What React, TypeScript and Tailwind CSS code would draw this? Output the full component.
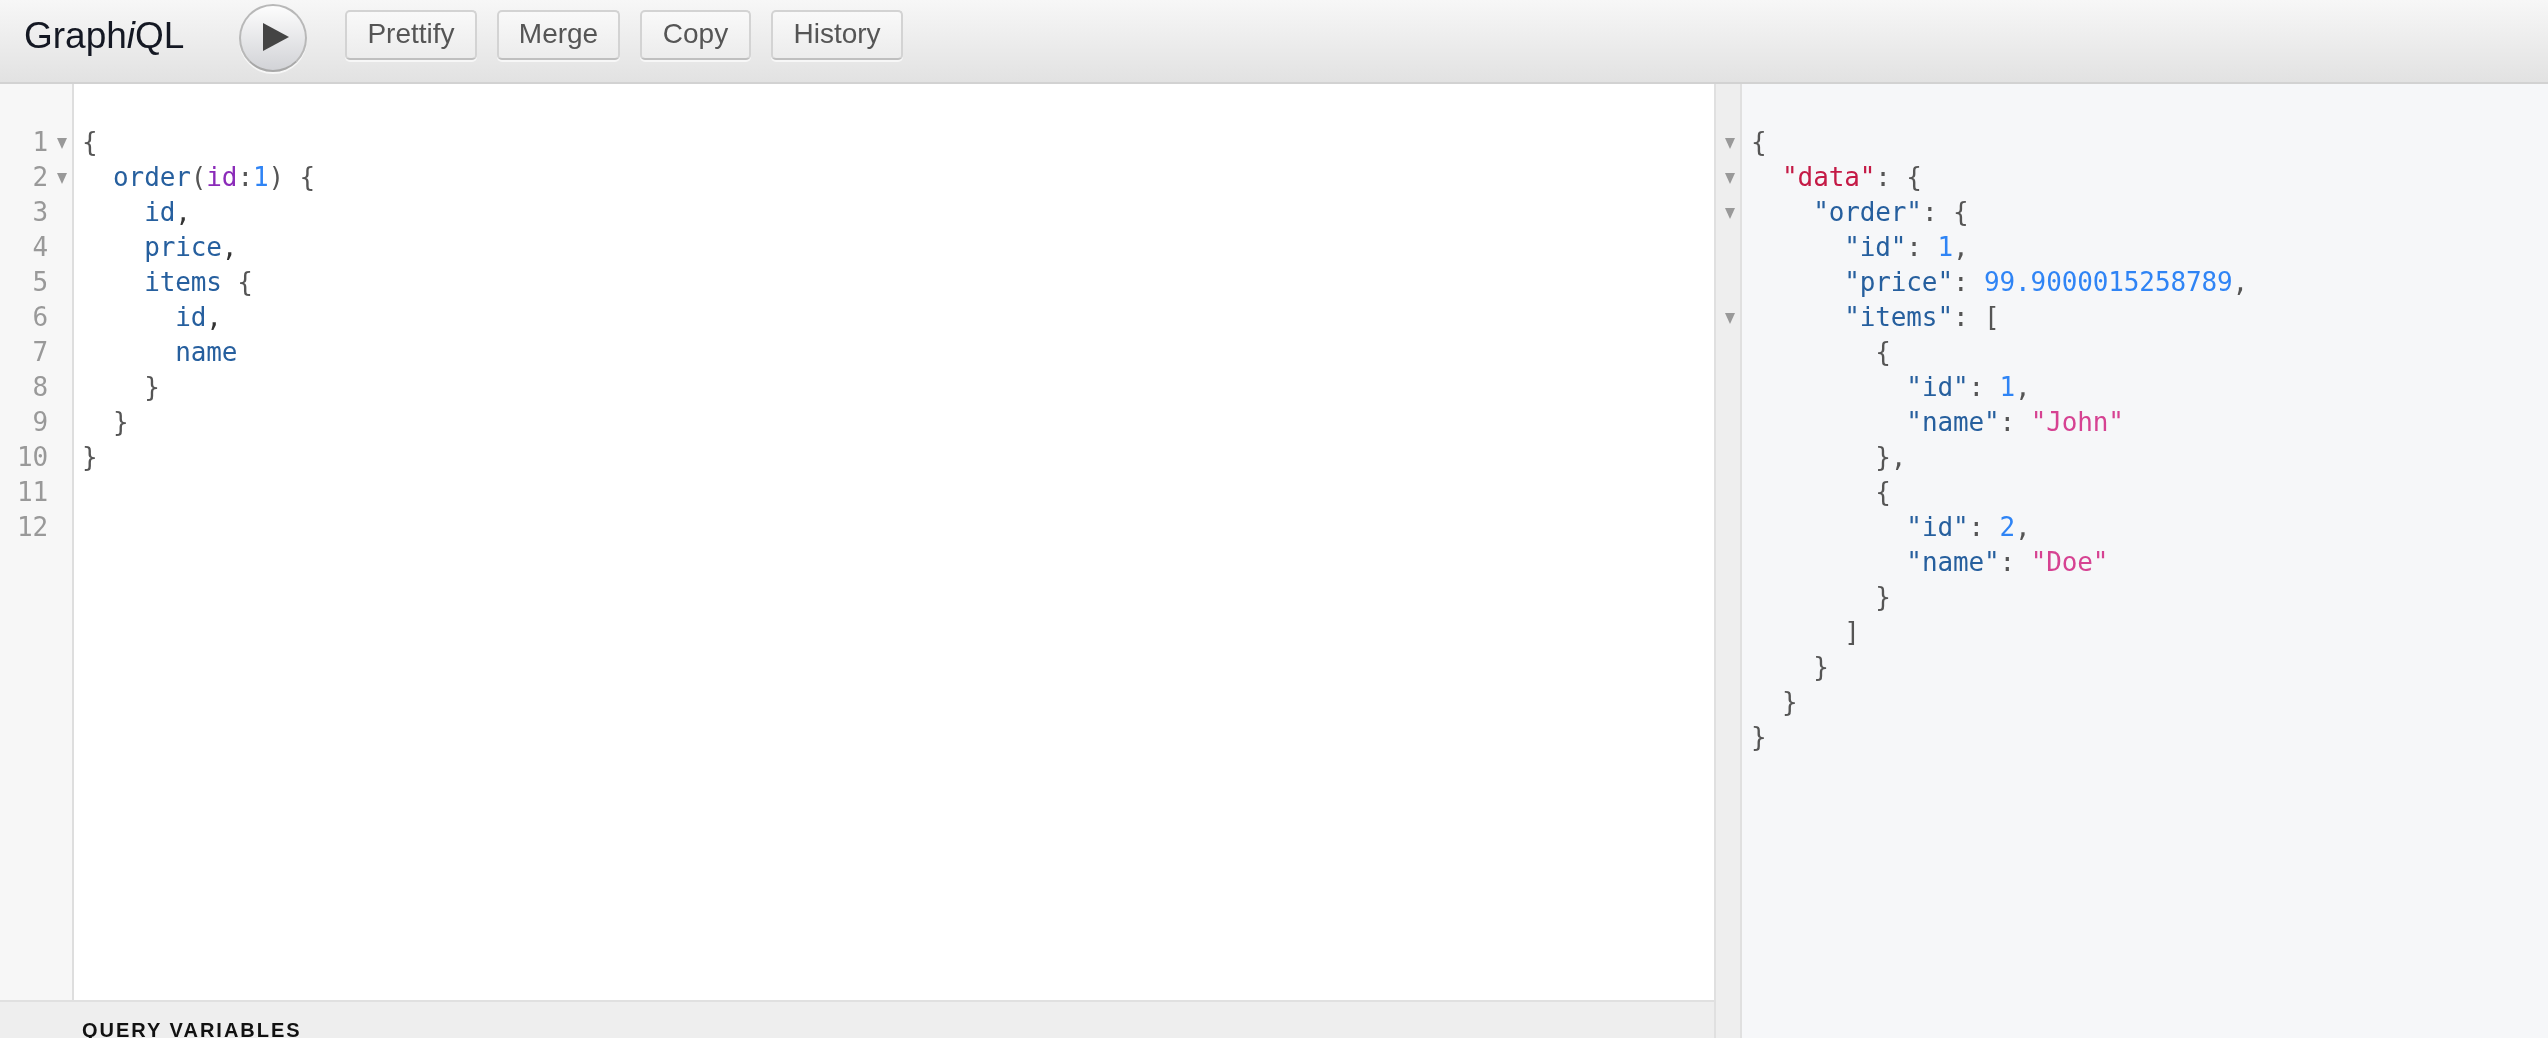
import React from 'react';

type Tok = [string, string];

const P = 'text-[#555555]';
const K = 'text-[#265f9e]';
const A = 'text-[#8b2bb9]';
const N = 'text-[#2f84f5]';
const S = 'text-[#d64292]';
const D = 'text-[#c41a46]';

const query: Tok[][] = [
  [['{', P]],
  [['  ', P], ['order', K], ['(', P], ['id', A], [':', P], ['1', N], [')', P], [' {', P]],
  [['    ', P], ['id', K], [',', 'text-[#333333]']],
  [['    ', P], ['price', K], [',', 'text-[#333333]']],
  [['    ', P], ['items', K], [' {', P]],
  [['      ', P], ['id', K], [',', 'text-[#333333]']],
  [['      ', P], ['name', K]],
  [['    }', P]],
  [['  }', P]],
  [['}', P]],
  [],
  [],
];

const result: Tok[][] = [
  [['{', P]],
  [['  ', P], ['"data"', D], [': {', P]],
  [['    ', P], ['"order"', K], [': {', P]],
  [['      ', P], ['"id"', K], [': ', P], ['1', N], [',', P]],
  [['      ', P], ['"price"', K], [': ', P], ['99.9000015258789', N], [',', P]],
  [['      ', P], ['"items"', K], [': [', P]],
  [['        {', P]],
  [['          ', P], ['"id"', K], [': ', P], ['1', N], [',', P]],
  [['          ', P], ['"name"', K], [': ', P], ['"John"', S]],
  [['        },', P]],
  [['        {', P]],
  [['          ', P], ['"id"', K], [': ', P], ['2', N], [',', P]],
  [['          ', P], ['"name"', K], [': ', P], ['"Doe"', S]],
  [['        }', P]],
  [['      ]', P]],
  [['    }', P]],
  [['  }', P]],
  [['}', P]],
];

const queryFolds = [0, 1];
const resultFolds = [0, 1, 2, 5];

function Fold() {
  return (
    <svg width="10" height="11" viewBox="0 0 10 11" className="block mt-[2px]">
      <polygon points="0,0 10,0 5,11" fill="#999999" />
    </svg>
  );
}

function Code({ lines }: { lines: Tok[][] }) {
  return (
    <div className="font-['DejaVu_Sans_Mono',monospace] text-[26px] leading-[35px] whitespace-pre tracking-[-0.12px]">
      {lines.map((line, i) => (
        <div key={i} className="h-[35px]">
          {line.map(([text, color], j) => (
            <span key={j} className={color}>{text}</span>
          ))}
        </div>
      ))}
    </div>
  );
}

function ToolbarButton({ label, width }: { label: string; width: string }) {
  return (
    <button
      className={`${width} h-[50px] rounded-[5px] border-2 border-[#d3d3d3] border-b-[#bfbfbf] bg-gradient-to-b from-[#f9f9f9] to-[#ececec] shadow-[0_2px_0_#f7f7f7] font-['Liberation_Sans',sans-serif] text-[28px] text-[#555555] flex items-center justify-center pb-[2px]`}
    >
      {label}
    </button>
  );
}

export default function App() {
  return (
    <div className="w-full h-screen overflow-hidden flex flex-col bg-white will-change-transform">
      {/* Toolbar */}
      <div className="h-[84px] shrink-0 flex items-center border-b-2 border-[#d2d2d2] bg-gradient-to-b from-[#f7f7f7] to-[#e2e2e2]">
        <div className="w-[239px] pl-[24px] pb-[10px] font-['Liberation_Sans',sans-serif] text-[37px] text-[#141823]">
          Graph<em>i</em>QL
        </div>
        <button className="w-[68px] h-[68px] rounded-full border-2 border-[#b8b8b8] border-b-[#a8a8a8] bg-gradient-to-b from-[#fdfdfd] to-[#d2d3d7] shadow-[0_2px_0_#f7f7f7] flex items-center justify-center mb-[7px]">
          <svg width="26" height="28" viewBox="0 0 26 28" className="ml-[5px] mb-[2px]">
            <polygon points="0,0 26,14 0,28" fill="#444444" />
          </svg>
        </button>
        <div className="flex ml-[38px] gap-[20px] mb-[12px]">
          <ToolbarButton label="Prettify" width="w-[132px]" />
          <ToolbarButton label="Merge" width="w-[123px]" />
          <ToolbarButton label="Copy" width="w-[111px]" />
          <ToolbarButton label="History" width="w-[132px]" />
        </div>
      </div>

      <div className="flex-1 min-h-0 flex">
        {/* Query editor */}
        <div className="w-[1714px] shrink-0 flex flex-col">
          <div className="flex-1 min-h-0 flex">
            <div className="w-[74px] shrink-0 bg-[#f7f7f7] border-r-2 border-[#dedede] pt-[41px]">
              {query.map((_, i) => (
                <div key={i} className="h-[35px] flex items-center font-['DejaVu_Sans_Mono',monospace] text-[26px] text-[#999999]">
                  <span className="w-[48px] text-right tracking-[-0.12px]">{i + 1}</span>
                  <span className="ml-[9px] w-[10px]">{queryFolds.includes(i) && <Fold />}</span>
                </div>
              ))}
            </div>
            <div className="flex-1 pl-[8px] pt-[41px]">
              <Code lines={query} />
            </div>
          </div>
          <div className="h-[38px] shrink-0 border-t-2 border-[#e0e0e0] bg-[#eeeeee] pl-[82px] pt-[18px] font-['Liberation_Sans',sans-serif] text-[20px] leading-[20px] font-bold tracking-[2px] text-[#111111] overflow-hidden">
            QUERY VARIABLES
          </div>
        </div>

        {/* Result pane */}
        <div className="w-[28px] shrink-0 bg-[#eeeeee] border-x-2 border-[#e0e0e0] pt-[41px] pl-[9px]">
          {result.map((_, i) => (
            <div key={i} className="h-[35px] flex items-center">
              {resultFolds.includes(i) && <Fold />}
            </div>
          ))}
        </div>
        <div className="flex-1 bg-[#f6f7f9] pl-[9px] pt-[41px]">
          <Code lines={result} />
        </div>
      </div>
    </div>
  );
}
